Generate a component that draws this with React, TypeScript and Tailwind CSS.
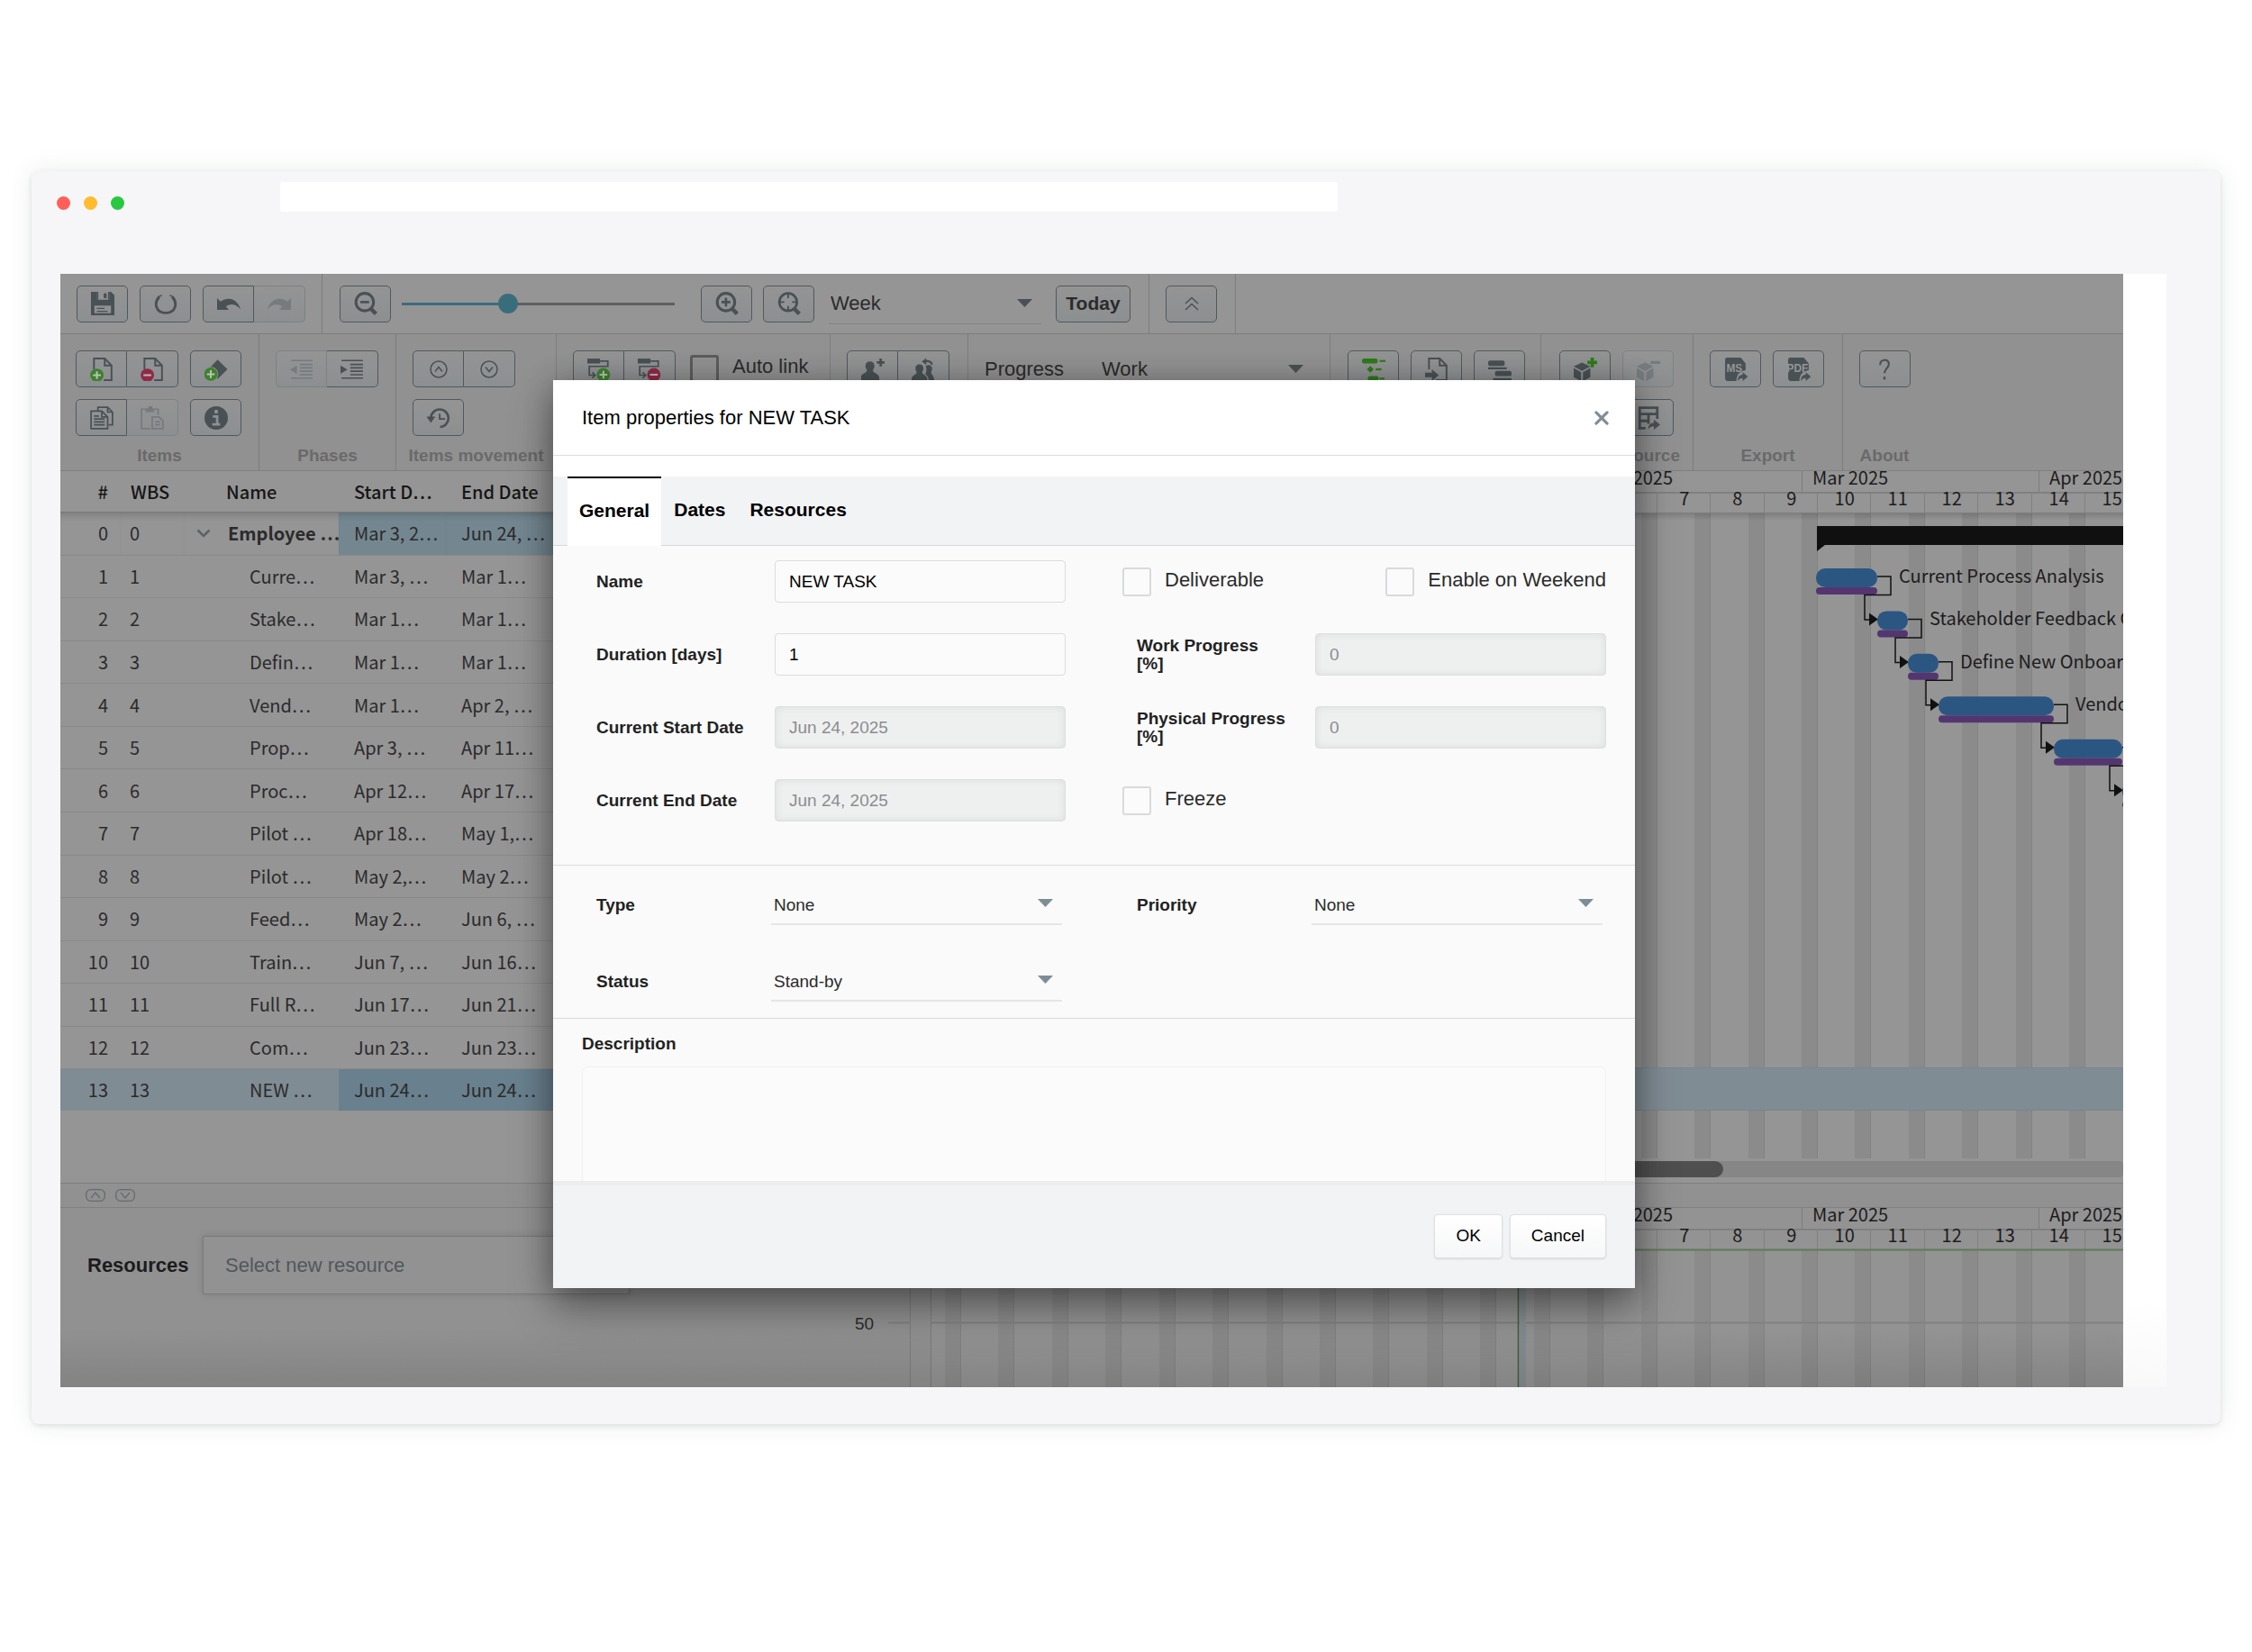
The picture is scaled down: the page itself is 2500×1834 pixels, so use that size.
import React from "react";

const WEEK = 59.45;
const ROW = 47.43;

/* ---------- icons ---------- */

type IconProps = { children: React.ReactNode };

function Icon({ children }: IconProps) {
  return (
    <svg width="26" height="26" viewBox="0 0 24 24" fill="none" stroke="currentColor" strokeWidth="1.6" aria-hidden="true">
      {children}
    </svg>
  );
}

const plusBadge = (x: number, y: number) => (
  <g stroke="none">
    <circle cx={x} cy={y} r="6.8" fill="#3f8030" />
    <path d={`M${x - 4} ${y}h8M${x} ${y - 4}v8`} stroke="#b5c4b0" strokeWidth="1.9" />
  </g>
);

const minusBadge = (x: number, y: number) => (
  <g stroke="none">
    <circle cx={x} cy={y} r="6.8" fill="#8f2a47" />
    <path d={`M${x - 4} ${y}h8`} stroke="#c9b0b8" strokeWidth="1.9" />
  </g>
);

const solid = { fill: "currentColor", stroke: "none" };

const icons = {
  save: (
    <Icon>
      <path {...solid} fillRule="evenodd" d="M0 0h6v8h13V0h1.500L24 3.500V24H0zM3.500 14v8h17v-8z" />
      <path {...solid} d="M6 0h1.500v8H6zM17.500 0H19v8h-1.500z" />
      <path {...solid} d="M13 1.500h3v5h-3z" />
      <path d="M6 17h8M6 20h11" strokeWidth="1.200" />
    </Icon>
  ),
  refresh: (
    <Icon>
      <path d="M5.500 5.200C-.5 11 1.500 21.500 12 21.500S24.500 11 18.500 5.200" strokeWidth="2.600" />
      <path d="M3.500 5.500l4.500-2M20.500 5.500l-4.500-2" strokeWidth="1.200" />
    </Icon>
  ),
  undo: (
    <Icon>
      <path {...solid} d="M0 6.500l3.500 3.500C11 4.500 21 7 24 18c-4.500-5.500-10-6.500-15-3l3 3.500H0z" />
    </Icon>
  ),
  redo: (
    <Icon>
      <path {...solid} d="M24 6.500l-3.500 3.500C13 4.500 3 7 0 18c4.500-5.500 10-6.500 15-3l-3 3.500h12z" />
    </Icon>
  ),
  zoomOut: (
    <Icon>
      <circle cx="11" cy="10.500" r="9" strokeWidth="2.800" />
      <path d="M6.500 10.500h9" strokeWidth="2.400" />
      <path d="M17 17l5.500 5.500" strokeWidth="4" />
    </Icon>
  ),
  zoomIn: (
    <Icon>
      <circle cx="11" cy="10.500" r="9" strokeWidth="2.800" />
      <path d="M6.500 10.500h9M11 6v9" strokeWidth="2.400" />
      <path d="M17 17l5.500 5.500" strokeWidth="4" />
    </Icon>
  ),
  zoomFit: (
    <Icon>
      <circle cx="11" cy="10.500" r="9" strokeWidth="2.400" />
      <path d="M11 1v5.500M11 14.500V20M1.500 10.500H7M15 10.500h5.500" strokeWidth="1.700" />
      <path d="M17 17l5.500 5.500" strokeWidth="4" />
    </Icon>
  ),
  collapse: (
    <svg width="16" height="16" viewBox="0 0 16 16" fill="none" stroke="currentColor" strokeWidth="1.400" aria-hidden="true">
      <path d="M1 8l7-6.500L15 8M1 15l7-6.500 7 6.500" />
    </svg>
  ),
  pageAdd: (
    <Icon>
      <path d="M4 12V1h11l7 7v15h-8M15 1v7h7" strokeWidth="1.800" />
      {plusBadge(7, 18)}
    </Icon>
  ),
  pageRemove: (
    <Icon>
      <path d="M4 12V1h11l7 7v15h-8M15 1v7h7" strokeWidth="1.800" />
      {minusBadge(7, 18)}
    </Icon>
  ),
  milestoneAdd: (
    <Icon>
      <path {...solid} d="M13.500 2L23.500 12 13.500 22 4 12z" />
      <circle cx="6.500" cy="17" r="7.600" fill="#8d8f90" stroke="none" />
      {plusBadge(6.5, 17)}
    </Icon>
  ),
  copy: (
    <Icon>
      <path d="M8 5V1h10l5 5v13h-4M18 1v5h5" />
      <path d="M1 5h11l6 6v12H1zM12 5v6h6M4 10h5M4 13h11M4 16h11M4 19h11" />
    </Icon>
  ),
  paste: (
    <Icon>
      <path d="M5 3H1v20h9M14 3h4v6" />
      <path {...solid} d="M5 2h3V0h4v2h2v4H5z" />
      <path d="M12 11h7l4 4v8H12zM15 16h5M15 19h5" />
    </Icon>
  ),
  info: (
    <Icon>
      <circle {...solid} cx="12" cy="12" r="12" />
      <path d="M8.500 10.500H13V18M8 18.500h8" stroke="#8d9092" strokeWidth="2.600" />
      <circle cx="12" cy="5.500" r="2" fill="#8d9092" stroke="none" />
    </Icon>
  ),
  outdent: (
    <Icon>
      <path d="M1 3h22M10 7h13M10 10.500h13M10 14h13M10 17.500h13M1 21h22" strokeWidth="1.500" />
      <path {...solid} d="M7 8v8.500L0 12.200z" />
    </Icon>
  ),
  indent: (
    <Icon>
      <path d="M1 3h22M10 7h13M10 10.500h13M10 14h13M10 17.500h13M1 21h22" strokeWidth="1.500" />
      <path {...solid} d="M0 8v8.500l7-4.300z" />
    </Icon>
  ),
  moveUp: (
    <svg width="20" height="20" viewBox="0 0 20 20" fill="none" stroke="currentColor" strokeWidth="1.500" aria-hidden="true">
      <circle cx="10" cy="10" r="9" />
      <path d="M6 12.500L10 7.500l4 5" />
    </svg>
  ),
  moveDown: (
    <svg width="20" height="20" viewBox="0 0 20 20" fill="none" stroke="currentColor" strokeWidth="1.500" aria-hidden="true">
      <circle cx="10" cy="10" r="9" />
      <path d="M6 7.500l4 5 4-5" />
    </svg>
  ),
  history: (
    <Icon>
      <path d="M4 12a9 9 0 1 1 9.500 9.200" strokeWidth="2.400" />
      <path {...solid} d="M-.5 10.500h9L4 17z" />
      <path d="M13 7.500V13h5.500" strokeWidth="1.700" />
    </Icon>
  ),
  linkAdd: (
    <Icon>
      <path {...solid} d="M0 1h13v5H0z" />
      <path d="M13 3.500h8v5.500H2V18h5M5 15l3 3-3 3" />
      {plusBadge(16.5, 17.5)}
    </Icon>
  ),
  linkRemove: (
    <Icon>
      <path {...solid} d="M0 1h13v5H0z" />
      <path d="M13 3.500h8v5.500H2V18h5M5 15l3 3-3 3" />
      {minusBadge(16.5, 17.5)}
    </Icon>
  ),
  userAdd: (
    <Icon>
      <path {...solid} d="M9 4c3 0 5 2 4.500 5.500-.2 1.500-1 2.500-1.500 3.500 0 3 6 3 6.500 7.500V24H-.5v-3.500C0 16 6 16 6 13c-.5-1-1.300-2-1.500-3.500C4 6 6 4 9 4z" />
      <path d="M16 5h8M20 1v8" strokeWidth="2.600" />
    </Icon>
  ),
  users: (
    <Icon>
      <path {...solid} d="M8 7c3 0 4.500 2 4 5-.2 1.200-.8 2-1.200 3 0 2.500 5.200 3 5.200 7v2H0v-2c0-4 5.200-4.500 5.200-7C4.800 14 4.200 13.200 4 12c-.5-3 1-5 4-5z" />
      <path {...solid} d="M14.500 8.500c4-2 7 0 6.500 3.500-.2 1.500-1 2-1 3 0 2.500 3 4 3 7v2h-5.500c0-4-1.500-5.500-3.500-7 1.500-2.500 1.500-5.500.5-8.500z" />
      <path d="M14 3.800c3-.8 6 .2 7 3.200" strokeWidth="2.200" />
      <path {...solid} d="M10.500 4L15 .5v7z" />
    </Icon>
  ),
  baseline: (
    <Icon>
      <g fill="#2e7a1c" stroke="none">
        <rect x="0" y="1" width="16" height="5" rx="2" />
        <rect x="18" y="2.500" width="6" height="2" />
        <path d="M8.500 8.500l3.500 3.500-3.500 3.500L5 12z" />
        <rect x="14" y="11" width="6" height="2" />
        <rect x="6" y="19" width="11" height="5" rx="2" />
        <rect x="18" y="20.500" width="5" height="2" />
      </g>
    </Icon>
  ),
  pageImport: (
    <Icon>
      <path d="M4 12V1h11l7 7v15H11M15 1v7h7" strokeWidth="1.800" />
      <path {...solid} d="M0 15.500h7V12l7 6-7 6v-4H0z" />
    </Icon>
  ),
  levels: (
    <Icon>
      <rect {...solid} x="0" y="3" width="17" height="5.500" rx="2" />
      <path d="M0 11h19M5 22h19" strokeWidth="2" />
      <rect {...solid} x="7" y="13.500" width="17" height="5.500" rx="2" />
    </Icon>
  ),
  cubeAdd: (
    <Icon>
      <path {...solid} d="M8.500 5l8.500 4-8.500 4.500L0 9zM0 10.500l7.500 4.500v9L0 20zM17 10.500L9.500 15v9l7.500-4z" />
      <path d="M14 5h10M19 0v10" stroke="#2e7a1c" strokeWidth="3.400" />
    </Icon>
  ),
  cubeRemove: (
    <Icon>
      <path {...solid} d="M8.500 5l8.500 4-8.500 4.500L0 9zM0 10.500l7.500 4.500v9L0 20zM17 10.500L9.500 15v9l7.500-4z" />
      <path d="M14 5h10" strokeWidth="3" />
    </Icon>
  ),
  tableShare: (
    <Icon>
      <path d="M3 24V1.500h18V13M3 8h18M12 8v10M3 15h10M3 22.500h6" strokeWidth="2.600" />
      <path {...solid} d="M11.500 24c.5-5 2.500-7 6-7v-3.500l6.500 5.500-6.500 5V20.500c-3 0-4.500 1-6 3.500z" />
    </Icon>
  ),
  exportMs: <ExportIcon label="MS" />,
  exportPdf: <ExportIcon label="PDF" />,
  help: (
    <Icon>
      <path d="M7.500 7.500c0-6.500 9-6.500 9-1 0 4-4.500 5-4.500 9.500" strokeWidth="2" />
      <path d="M12 19.500v3" strokeWidth="2.200" />
    </Icon>
  ),
};

function ExportIcon({ label }: { label: string }) {
  return (
    <Icon>
      <path {...solid} d="M3 0h14l5 6v7c-6 1-9 4-9.500 11H3a3 3 0 0 1-2-3V2a2 2 0 0 1 2-2z" />
      <path {...solid} d="M14 24c0-4.500 2-6.500 5-6.500V15l5.500 4.500L19 24v-3c-2 0-3.500 1-5 3z" />
      <text x="10.500" y="14.500" textAnchor="middle" fontSize="11" fontWeight="700" fill="#939698" stroke="none" fontFamily="Liberation Sans, sans-serif">
        {label}
      </text>
    </Icon>
  );
}

function Caret({ color }: { color: string }) {
  return (
    <svg width="17" height="9" viewBox="0 0 17 9" aria-hidden="true" className="pointer-events-none shrink-0">
      <path d="M0 0h17L8.500 9z" fill={color} />
    </svg>
  );
}

/* ---------- toolbar ---------- */

function ToolButton({ icon, label, disabled = false, joined = "" }: { icon: keyof typeof icons; label: string; disabled?: boolean; joined?: "" | "left" | "right" }) {
  const shape = joined === "left" ? "rounded-l-[5px]" : joined === "right" ? "rounded-r-[5px] border-l-0" : "rounded-[5px]";
  const tone = disabled ? "border-[#7c8285] text-[#757b7e]" : "border-[#50595d] text-[#495154]";
  return (
    <button
      type="button"
      aria-label={label}
      disabled={disabled}
      className={`flex h-[41px] w-[57px] items-center justify-center border bg-linear-to-b from-[#949494] to-[#8c8f91] ${shape} ${tone}`}
    >
      {icons[icon]}
    </button>
  );
}

function ToolGroup({ title = "", className, children }: { title?: string; className: string; children: React.ReactNode }) {
  return (
    <section className={`flex shrink-0 flex-col border-r border-[#7d7d7d] pt-[18px] ${className}`}>
      <div className="flex flex-col gap-[13px]">{children}</div>
      <h3 className="mt-auto h-8 text-center text-[19px]/8 font-bold text-[#6a6a6a]">{title}</h3>
    </section>
  );
}

function TopBar() {
  return (
    <div className="flex h-[67px] items-stretch border-b border-[#7d7d7d] bg-[#959595]">
      <div className="flex w-[291px] items-center gap-[13px] border-r border-[#7d7d7d] pl-[18px]">
        <ToolButton icon="save" label="Save" />
        <ToolButton icon="refresh" label="Refresh" />
        <div className="flex">
          <ToolButton icon="undo" label="Undo" joined="left" />
          <ToolButton icon="redo" label="Redo" joined="right" disabled />
        </div>
      </div>
      <div className="flex w-[918px] items-center border-r border-[#7d7d7d] pl-[19px]">
        <ToolButton icon="zoomOut" label="Zoom out" />
        <input
          type="range"
          aria-label="Zoom level"
          defaultValue={38}
          className="mx-3 h-6 w-[303px] appearance-none bg-linear-to-r from-[#3a6d7b] from-40% to-[#5f5f5f] to-40% bg-[length:100%_3px] bg-center bg-no-repeat [&::-webkit-slider-thumb]:size-[22px] [&::-webkit-slider-thumb]:appearance-none [&::-webkit-slider-thumb]:rounded-full [&::-webkit-slider-thumb]:bg-[#3a6d7b]"
        />
        <div className="ml-[17px] flex gap-3">
          <ToolButton icon="zoomIn" label="Zoom in" />
          <ToolButton icon="zoomFit" label="Zoom to fit" />
        </div>
        <div className="ml-4 flex h-[45px] w-[236px] items-center border-b border-[#828282] pr-2.5">
          <select aria-label="Time scale" className="-mr-5 min-w-0 flex-1 appearance-none pl-0.5 text-[22px] text-[#2b2b2b]">
            <option>Week</option>
          </select>
          <Caret color="#495154" />
        </div>
        <button
          type="button"
          className="ml-4 h-[41px] w-[83px] rounded-[5px] border border-[#50595d] bg-linear-to-b from-[#949494] to-[#8c8f91] text-[21px] font-bold text-[#2b2b2b]"
        >
          Today
        </button>
      </div>
      <div className="flex w-[96px] items-center border-r border-[#7d7d7d] pl-[18px]">
        <ToolButton icon="collapse" label="Collapse toolbar" />
      </div>
    </div>
  );
}

function Ribbon() {
  return (
    <div className="flex h-[152px] items-stretch border-b border-[#808080] bg-[#919191]">
      <ToolGroup title="Items" className="w-[221px]">
        <div className="flex gap-[13px] pl-[17px]">
          <div className="flex">
            <ToolButton icon="pageAdd" label="Add item" joined="left" />
            <ToolButton icon="pageRemove" label="Remove item" joined="right" />
          </div>
          <ToolButton icon="milestoneAdd" label="Add milestone" />
        </div>
        <div className="flex gap-[13px] pl-[17px]">
          <div className="flex">
            <ToolButton icon="copy" label="Copy" joined="left" />
            <ToolButton icon="paste" label="Paste" joined="right" disabled />
          </div>
          <ToolButton icon="info" label="Item properties" />
        </div>
      </ToolGroup>
      <ToolGroup title="Phases" className="w-[152px]">
        <div className="flex pl-[18px]">
          <ToolButton icon="outdent" label="Outdent" joined="left" disabled />
          <ToolButton icon="indent" label="Indent" joined="right" />
        </div>
      </ToolGroup>
      <ToolGroup title="Items movement" className="w-[178px]">
        <div className="flex pl-[18px]">
          <ToolButton icon="moveUp" label="Move up" joined="left" />
          <ToolButton icon="moveDown" label="Move down" joined="right" />
        </div>
        <div className="flex pl-[18px]">
          <ToolButton icon="history" label="History" />
        </div>
      </ToolGroup>
      <ToolGroup className="w-[304px]">
        <div className="flex items-center pl-[18px]">
          <ToolButton icon="linkAdd" label="Add link" joined="left" />
          <ToolButton icon="linkRemove" label="Remove link" joined="right" />
          <label className="ml-4 flex items-center gap-[15px] text-[22px]/8 text-[#2b2b2b]">
            <input type="checkbox" className="size-8 appearance-none rounded-[3px] border-[3px] border-[#5c5c5c]" />
            <span className="pb-1.5">Auto link</span>
          </label>
        </div>
      </ToolGroup>
      <ToolGroup className="w-[153px]">
        <div className="flex pl-[18px]">
          <ToolButton icon="userAdd" label="Add user" joined="left" />
          <ToolButton icon="users" label="Assign users" joined="right" />
        </div>
      </ToolGroup>
      <ToolGroup className="w-[402px]">
        <div className="flex h-[41px] items-center pr-[29px] pl-[18px] text-[22px] text-[#2b2b2b]">
          <label htmlFor="progress-kind" className="w-[130px]">
            Progress
          </label>
          <select id="progress-kind" className="-mr-5 flex-1 appearance-none">
            <option>Work</option>
          </select>
          <Caret color="#495154" />
        </div>
      </ToolGroup>
      <ToolGroup className="w-[234px]">
        <div className="flex gap-[13px] pl-[19px]">
          <ToolButton icon="baseline" label="Baseline" />
          <ToolButton icon="pageImport" label="Import" />
          <ToolButton icon="levels" label="Levels" />
        </div>
      </ToolGroup>
      <section className="flex w-[169px] shrink-0 flex-col border-r border-[#7d7d7d] pt-[18px]">
        <div className="flex flex-col items-end gap-[13px] pr-[21px]">
          <div className="flex gap-[13px]">
            <ToolButton icon="cubeAdd" label="Add resource" />
            <ToolButton icon="cubeRemove" label="Remove resource" disabled />
          </div>
          <ToolButton icon="tableShare" label="Share resources" />
        </div>
        <h3 className="mt-auto h-8 pr-3.5 text-right text-[19px]/8 font-bold text-[#6a6a6a]">Resource</h3>
      </section>
      <ToolGroup title="Export" className="w-[166px]">
        <div className="flex gap-[13px] pl-[18px]">
          <ToolButton icon="exportMs" label="Export to MS Project" />
          <ToolButton icon="exportPdf" label="Export to PDF" />
        </div>
      </ToolGroup>
      <section className="flex w-[92px] shrink-0 flex-col items-center pt-[18px]">
        <ToolButton icon="help" label="About" />
        <h3 className="mt-auto h-8 text-[19px]/8 font-bold text-[#6a6a6a]">About</h3>
      </section>
    </div>
  );
}

/* ---------- task table ---------- */

const tasks: [string, string, string][] = [
  ["Employee …", "Mar 3, 2…", "Jun 24, …"],
  ["Curre…", "Mar 3, …", "Mar 1…"],
  ["Stake…", "Mar 1…", "Mar 1…"],
  ["Defin…", "Mar 1…", "Mar 1…"],
  ["Vend…", "Mar 1…", "Apr 2, …"],
  ["Prop…", "Apr 3, …", "Apr 11…"],
  ["Proc…", "Apr 12…", "Apr 17…"],
  ["Pilot …", "Apr 18…", "May 1,…"],
  ["Pilot …", "May 2,…", "May 2…"],
  ["Feed…", "May 2…", "Jun 6, …"],
  ["Train…", "Jun 7, …", "Jun 16…"],
  ["Full R…", "Jun 17…", "Jun 21…"],
  ["Com…", "Jun 23…", "Jun 23…"],
  ["NEW …", "Jun 24…", "Jun 24…"],
];

function TaskTable() {
  return (
    <div className="w-[547px] shrink-0 bg-[#959595] font-['Noto_Sans_CJK_SC',sans-serif] text-[20px]/6 whitespace-nowrap text-[#2b2b2b]">
      <table className="h-[710px] w-full table-fixed border-separate border-spacing-0 text-left">
        <colgroup>
          <col className="w-[67px]" />
          <col className="w-[70px]" />
          <col className="w-[172px]" />
          <col className="w-[119px]" />
          <col className="w-[119px]" />
        </colgroup>
        <thead>
          <tr className="h-[46px] font-medium text-[#161616] *:border-b *:border-[#7a7a7a] *:p-0 *:font-medium">
            <th scope="col">
              <div className="pr-3.5 text-right">#</div>
            </th>
            <th scope="col">
              <div className="pl-[11px]">WBS</div>
            </th>
            <th scope="col">
              <div className="pl-[47px]">Name</div>
            </th>
            <th scope="col">
              <div className="pl-[17px]">Start D…</div>
            </th>
            <th scope="col">
              <div className="pl-[17px]">End Date</div>
            </th>
          </tr>
        </thead>
        <tbody>
          {tasks.map(([name, start, end], i) => {
            const last = i === tasks.length - 1;
            const dates = last ? "bg-[#69808e]" : i === 0 ? "bg-[#748791]" : "bg-linear-to-b";
            return (
              <tr key={i} className={`*:p-0 ${last ? "bg-[#808c94]" : "*:border-b *:border-[#898989]"} ${i === 0 ? "*:shadow-[inset_0_8px_8px_-6px_rgba(0,0,0,0.2)]" : ""}`}>
                <td>
                  <div className="pr-3.5 text-right">{i}</div>
                </td>
                <td>
                  <div className="pl-2.5">{i}</div>
                </td>
                <td>
                  {i === 0 ? (
                    <div className="flex items-center gap-[19px] pl-[14px] font-bold">
                      <svg width="16" height="10" viewBox="0 0 16 10" fill="none" stroke="#596265" strokeWidth="2.500" aria-hidden="true" className="shrink-0">
                        <path d="M1.500 1.500L8 8l6.500-6.500" />
                      </svg>
                      {name}
                    </div>
                  ) : (
                    <div className="pl-[73px]">{name}</div>
                  )}
                </td>
                <td className={dates}>
                  <div className="pl-[17px]">{start}</div>
                </td>
                <td className={dates}>
                  <div className="pl-[17px]">{end}</div>
                </td>
              </tr>
            );
          })}
        </tbody>
      </table>
    </div>
  );
}

/* ---------- time line charts ---------- */

const chartFont = "'Noto Sans CJK SC', sans-serif";

const months = [
  { name: "Jan 2025", day: -59 },
  { name: "Feb 2025", day: -30 },
  { name: "Mar 2025", day: -2 },
  { name: "Apr 2025", day: 29 },
];

function weekX(week: number, origin: number) {
  return Math.round(origin + (week - 10) * WEEK);
}

function TimeHeader({ origin, start, top }: { origin: number; start: number; top: number }) {
  const weeks = Array.from({ length: 24 }, (_, i) => i - 8).filter((w) => weekX(w, origin) > start);
  return (
    <g>
      <path d={`M${start} ${top + 24}H2000`} stroke="#808080" strokeWidth="2" />
      {months.map((m) => {
        const x = Math.round(origin + (m.day * WEEK) / 7);
        return x < start ? null : (
          <g key={m.name}>
            <path d={`M${x + 0.5} ${top}v23`} stroke="#7d7d7d" />
            <text x={x + 12} y={top + 15}>
              {m.name}
            </text>
          </g>
        );
      })}
      {weeks.map((w) => {
        const x = weekX(w, origin);
        return (
          <g key={w}>
            <path d={`M${x + 0.5} ${top + 24}v22`} stroke="#808080" />
            <text x={x + WEEK / 2 + 1} y={top + 38} textAnchor="middle">
              {w < 1 ? w + 52 : w}
            </text>
          </g>
        );
      })}
    </g>
  );
}

function WeekGrid({ origin, start, top, bottom }: { origin: number; start: number; top: number; bottom: number }) {
  const weeks = Array.from({ length: 26 }, (_, i) => i - 9).filter((w) => weekX(w, origin) > start + 17);
  return (
    <g>
      {weeks.map((w) => {
        const x = weekX(w, origin);
        return (
          <g key={w}>
            <rect x={x - 17} y={top} width="17" height={bottom - top} fill="#8b8b8b" />
            <path d={`M${x + 0.5} ${top}V${bottom}`} stroke="#828282" />
          </g>
        );
      })}
    </g>
  );
}

const bars = [
  { x: 0, w: 68, label: "Current Process Analysis" },
  { x: 68, w: 34, label: "Stakeholder Feedback Collection" },
  { x: 102, w: 34, label: "Define New Onboarding" },
  { x: 136, w: 128, label: "Vendor Selection" },
  { x: 264, w: 76, label: "" },
  { x: 340, w: 50, label: "" },
];

function GanttChart() {
  const origin = 1403;
  return (
    <svg width="100%" height="790" className="min-w-0 flex-1 bg-[#959595]" role="img" aria-label="Gantt chart" fontFamily={chartFont} fontSize="20" fill="#1c1c1c">
      <defs>
        <linearGradient id="head-shade" x2="0" y2="1">
          <stop offset="0" stopOpacity="0.14" />
          <stop offset="1" stopOpacity="0" />
        </linearGradient>
      </defs>
      <WeekGrid origin={origin} start={0} top={47} bottom={763} />
      <TimeHeader origin={origin} start={0} top={0} />
      <path d="M0 46.500H2000" stroke="#7d7d7d" />
      <rect x="0" y="47" width="100%" height="8" fill="url(#head-shade)" />
      <rect x="0" y="662" width="100%" height="48" fill="#808c94" />
      <path d="M0 662.500H2000M0 709.500H2000" stroke="#77868f" />
      <path d={`M${origin} 61H2000V82H${origin + 9}L${origin} 89z`} fill="#101010" />
      {bars.map((b, i) => {
        const x = origin + b.x - 1;
        const end = x + b.w;
        const y = 108 + i * ROW;
        return (
          <g key={b.x}>
            <rect x={x} y={y} width={b.w} height="21" rx="10" fill="#2c5682" />
            <rect x={x} y={y + 21} width={b.w} height="8" rx="4" fill="#533670" />
            <path d={`M${end} ${y + 9}h15v20.500H${end - 14}v27.500h8`} fill="none" stroke="#111" strokeWidth="1.500" />
            <path d={`M${end - 9} ${y + 49.5}l10 7-10 7z`} fill="#111" />
            <text x={end + 24} y={y + 16}>
              {b.label}
            </text>
          </g>
        );
      })}
      <rect x="0" y="766" width="100%" height="18" rx="4" fill="#868686" />
      <rect x="700" y="766" width="599" height="18" rx="9" fill="#4f4f4f" />
    </svg>
  );
}

function LoadChart() {
  const origin = 1090;
  return (
    <svg width="100%" height="199" className="min-w-0 flex-1" role="img" aria-label="Resource load" fontFamily={chartFont} fontSize="20" fill="#1c1c1c">
      <rect x="106" y="0" width="100%" height="199" fill="#939393" />
      <WeekGrid origin={origin} start={106} top={47} bottom={199} />
      <TimeHeader origin={origin} start={106} top={0} />
      <path d="M106 46.500H2000" stroke="#5f7a5a" strokeWidth="2" />
      <path d="M83.500 0V199M106.500 0V199" stroke="#7d7d7d" />
      <path d="M59 127.500H83M106 127.500H2000" stroke="#818181" strokeWidth="2" />
      <rect x="760" y="47" width="7" height="152" fill="#858c8f" />
      <path d="M758.500 47V199" stroke="#3f5f3c" strokeWidth="1.500" />
      <text x="22" y="135" fontSize="19" fontFamily="Liberation Sans, sans-serif" fill="#2b2b2b">
        50
      </text>
    </svg>
  );
}

/* ---------- dialog ---------- */

const disabledField = "border-[#dcdfe0] bg-[#eef0f0] text-[#8b8d8f] shadow-[inset_0_0_8px_rgba(0,0,0,0.08)]";

function Field({ id, label, value, disabled = false }: { id: string; label: string; value: string; disabled?: boolean }) {
  return (
    <div className="flex h-[47px] items-center">
      <label htmlFor={id} className="w-[198px] shrink-0 pr-[29px] text-[19px]/5 font-bold">
        {label}
      </label>
      <input
        id={id}
        type="text"
        defaultValue={value}
        disabled={disabled}
        className={`h-[47px] min-w-0 flex-1 rounded-[4px] border px-[15px] text-[19px] ${disabled ? disabledField : "border-[#dcdcdc] bg-[#fbfbfb] text-black"}`}
      />
    </div>
  );
}

function Tick({ label }: { label: string }) {
  return (
    <label className="flex items-center gap-[15px] text-[22px]/8 text-[#2b2b2b]">
      <input type="checkbox" className="size-8 appearance-none rounded-[3px] border-2 border-[#d9dadb] bg-[#fbfbfb]" />
      <span className="pb-1">{label}</span>
    </label>
  );
}

function Choice({ id, label, value }: { id: string; label: string; value: string }) {
  return (
    <div className="flex h-[41px] items-center">
      <label htmlFor={id} className="-mr-1 w-[198px] shrink-0 pb-1 text-[19px]/5 font-bold">
        {label}
      </label>
      <div className="mr-1 flex h-full flex-1 items-center border-b-2 border-[#e6e6e6] pr-2.5">
        <select id={id} className="-mr-5 h-full flex-1 appearance-none pl-[3px] text-[19px] text-[#2b2b2b]">
          <option>{value}</option>
        </select>
        <div className="pb-1.5">
          <Caret color="#7e8c95" />
        </div>
      </div>
    </div>
  );
}

function ItemDialog() {
  return (
    <div
      role="dialog"
      aria-labelledby="dialog-title"
      className="w-[1201px] bg-[#fafafa] text-[#222] shadow-[0_22px_44px_rgba(0,0,0,0.36),0_2px_30px_rgba(0,0,0,0.24)]"
    >
      <header className="flex h-[84px] items-center justify-between border-b border-[#dedede] bg-white pr-[29px] pl-8">
        <h2 id="dialog-title" className="text-[22px] text-black">
          Item properties for NEW TASK
        </h2>
        <button type="button" aria-label="Close" className="text-[#7e8c98]">
          <svg width="16" height="16" viewBox="0 0 17 17" fill="none" stroke="currentColor" strokeWidth="3.200" strokeLinecap="round" aria-hidden="true">
            <path d="M2 2l13 13M15 2L2 15" />
          </svg>
        </button>
      </header>
      <div className="bg-white pt-[23px]">
        <div role="tablist" className="flex h-[77px] gap-px border-b border-[#d6d8da] bg-[#f2f3f5] pl-4 text-[21px] font-bold text-black">
          <button type="button" role="tab" aria-selected="true" className="-mb-px border-t-2 border-black bg-white px-[13px] pb-1">
            General
          </button>
          <button type="button" role="tab" aria-selected="false" className="px-[13px] pb-0.5">
            Dates
          </button>
          <button type="button" role="tab" aria-selected="false" className="px-[13px] pb-0.5">
            Resources
          </button>
        </div>
      </div>
      <div className="grid grid-cols-2 gap-x-[79px] gap-y-[34px] border-b border-[#dddddd] pt-4 pr-8 pb-12 pl-12">
        <Field id="f-name" label="Name" value="NEW TASK" />
        <div className="-ml-4 flex items-center justify-between">
          <Tick label="Deliverable" />
          <Tick label="Enable on Weekend" />
        </div>
        <Field id="f-duration" label="Duration [days]" value="1" />
        <Field id="f-work" label="Work Progress [%]" value="0" disabled />
        <Field id="f-start" label="Current Start Date" value="Jun 24, 2025" disabled />
        <Field id="f-physical" label="Physical Progress [%]" value="0" disabled />
        <Field id="f-end" label="Current End Date" value="Jun 24, 2025" disabled />
        <div className="-ml-4 flex items-center">
          <Tick label="Freeze" />
        </div>
      </div>
      <div className="grid grid-cols-2 gap-x-[79px] gap-y-[44px] border-b border-[#d9d9d9] pt-[25px] pr-8 pb-[18px] pl-12">
        <Choice id="f-type" label="Type" value="None" />
        <Choice id="f-priority" label="Priority" value="None" />
        <Choice id="f-status" label="Status" value="Stand-by" />
      </div>
      <div className="h-[180px] overflow-hidden px-8 pt-[17px]">
        <label htmlFor="f-description" className="block text-[19px]/[22px] font-bold">
          Description
        </label>
        <textarea id="f-description" className="mt-3.5 block h-40 w-full resize-none rounded-[6px] border border-[#f0f0f0] bg-[#fbfbfb]" />
      </div>
      <footer className="flex h-[119px] justify-end gap-2 border-t-[5px] border-[#eceeee] bg-[#f2f3f5] pt-8 pr-8 text-[19px] text-black *:h-[49px] *:rounded-[4px] *:border *:border-[#dfe1e3] *:bg-linear-to-b *:from-white *:to-[#f6f7f8] *:px-[23px] *:shadow-[0_1px_2px_rgba(0,0,0,0.12)]">
        <button type="button">OK</button>
        <button type="button">Cancel</button>
      </footer>
    </div>
  );
}

/* ---------- page ---------- */

function PaneToggle({ d, label }: { d: string; label: string }) {
  return (
    <button type="button" aria-label={label} className="text-[#646b6e]">
      <svg width="22" height="14" viewBox="0 0 22 14" fill="none" stroke="currentColor" strokeWidth="1.300" aria-hidden="true">
        <rect x="0.700" y="0.700" width="20.600" height="12.600" rx="5" />
        <path d={d} />
      </svg>
    </button>
  );
}

export default function App() {
  return (
    <div className="min-h-screen bg-white px-[35px] pt-[190px] pb-10 font-['Liberation_Sans',Arial,sans-serif]">
      <main className="rounded-[8px] bg-[#f6f6f8] pb-[41px] shadow-[0_0_28px_rgba(30,50,50,0.09),0_2px_6px_rgba(0,0,0,0.1)]">
        <div className="flex h-[114px] pt-3 pl-7">
          <div className="mt-4 flex w-[248px] gap-[15px]">
            <span className="size-[15px] rounded-full bg-[#ff5f57]" />
            <span className="size-[15px] rounded-full bg-[#febc2e]" />
            <span className="size-[15px] rounded-full bg-[#28c840]" />
          </div>
          <div className="h-[33px] w-[1174px] rounded-[3px] bg-white" />
        </div>
        <div className="mr-[60px] ml-8 flex">
          <div className="relative min-w-0 flex-1 overflow-hidden bg-[#919191]">
            <TopBar />
            <Ribbon />
            <div className="flex bg-[#959595]">
              <TaskTable />
              <GanttChart />
            </div>
            <div className="flex h-7 items-center gap-[11px] border-y border-[#7f7f7f] pl-7">
              <PaneToggle label="Expand lower pane" d="M6 10l5-6 5 6" />
              <PaneToggle label="Collapse lower pane" d="M6 4l5 6 5-6" />
            </div>
            <div className="flex h-[199px]">
              <div className="flex w-[860px] shrink-0 items-start pt-[31px] pl-[30px] text-[22px]">
                <label htmlFor="resource" className="w-32 text-[22px]/[65px] font-bold text-[#1c1c1c]">
                  Resources
                </label>
                <input
                  id="resource"
                  type="text"
                  placeholder="Select new resource"
                  className="h-[65px] w-[474px] border border-[#7a7a7a] bg-[#929292] px-6 shadow-[0_0_8px_rgba(0,0,0,0.12)] placeholder:text-[#51585c]"
                />
              </div>
              <LoadChart />
            </div>
            <div className="pointer-events-none absolute inset-x-0 bottom-0 h-16 bg-linear-to-t from-black/10 to-transparent" />
            <div className="absolute inset-0 flex items-start justify-center pt-[118px] pl-[5px]">
              <ItemDialog />
            </div>
          </div>
          <div className="w-12 bg-linear-to-t from-[#f9f9f9] to-white to-8%" />
        </div>
      </main>
    </div>
  );
}
